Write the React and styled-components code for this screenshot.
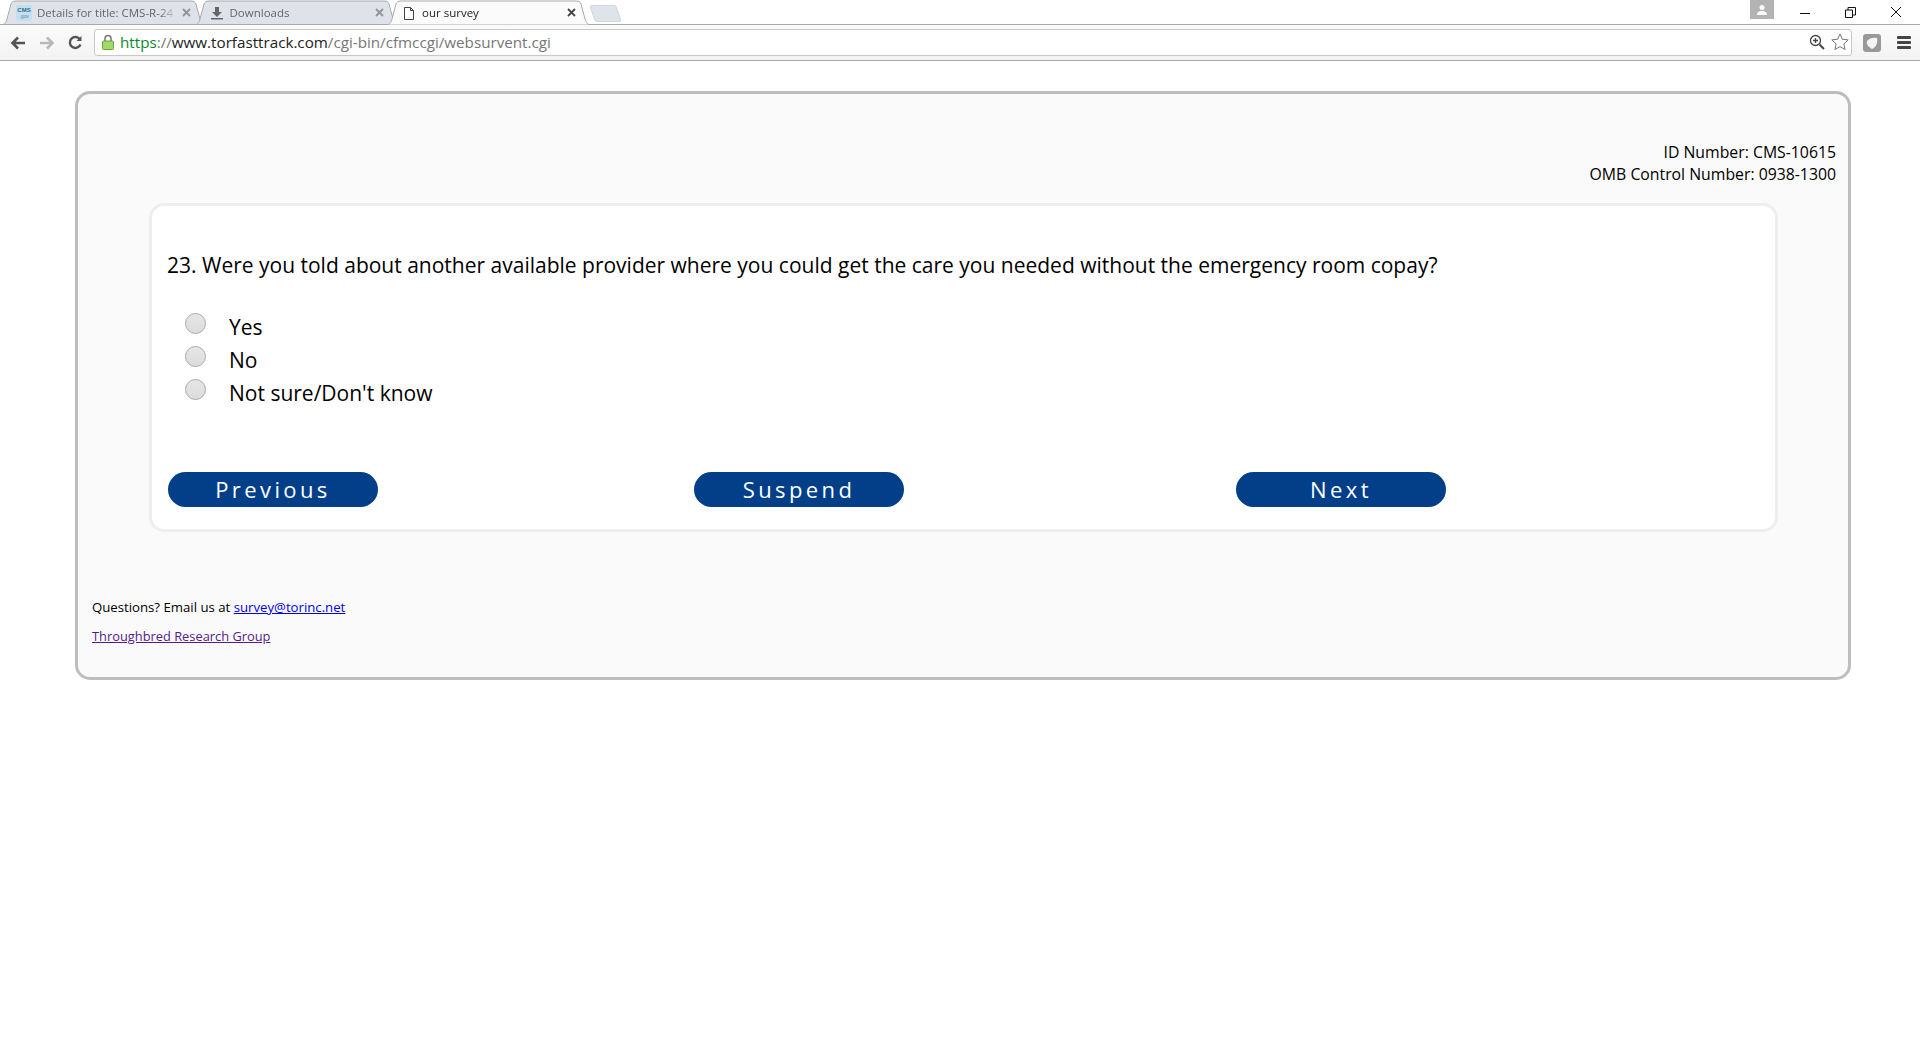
import React from "react"
import styled, { createGlobalStyle } from "styled-components"

const GlobalStyle = createGlobalStyle`
  html, body {
    margin: 0;
    padding: 0;
    background: #fff;
  }
  body {
    font-family: "Open Sans", "Noto Sans", sans-serif;
    color: #000;
  }
`

const Browser = styled.div`
  height: 1040px;
  display: flex;
  flex-direction: column;
  overflow: hidden;
`

const TabStrip = styled.div`
  height: 25px;
  display: flex;
  background: #fff;
  position: relative;
  &::after {
    content: "";
    position: absolute;
    left: 0;
    right: 0;
    bottom: 0;
    height: 1px;
    background: #a9a9a9;
    z-index: 2;
  }
`

const Tab = styled.div`
  width: 207px;
  height: 25px;
  flex: none;
  margin-right: -14.5px;
  display: flex;
  align-items: center;
  gap: 5px;
  padding: 0 16px;
  box-sizing: border-box;
  position: relative;
  font-size: 11.5px;
  color: ${p => (p.$active ? "#222" : "#62666c")};
  z-index: ${p => (p.$active ? 3 : 1)};
`

const TabShapeSvg = styled.svg`
  position: absolute;
  top: 0;
  left: 0;
  z-index: -1;
`

const TabTitle = styled.span`
  flex: 1;
  min-width: 0;
  white-space: nowrap;
  overflow: hidden;
  -webkit-mask-image: linear-gradient(to right, #000 88%, transparent);
  mask-image: linear-gradient(to right, #000 88%, transparent);
`

const TabClose = styled.span`
  width: 9px;
  height: 9px;
  display: flex;
  color: ${p => (p.$active ? "#444" : "#8f9296")};
`

const NewTab = styled.div`
  width: 25px;
  height: 15px;
  flex: none;
  margin: 5px 0 0 14px;
  background: #dfe3ea;
  border: 1px solid #d2d5d9;
  border-radius: 3px;
  transform: skewX(18deg);
`

const WindowControls = styled.div`
  position: absolute;
  top: 0;
  right: 2px;
  display: flex;
  align-items: flex-start;
`

const Avatar = styled.div`
  width: 24px;
  height: 19px;
  margin-right: 9px;
  background: #b3b3b3;
  display: flex;
  align-items: center;
  justify-content: center;
`

const WinButton = styled.div`
  width: 45px;
  height: 24px;
  display: flex;
  align-items: center;
  justify-content: center;
`

const Toolbar = styled.div`
  height: 36px;
  box-sizing: border-box;
  display: flex;
  align-items: center;
  background: linear-gradient(#fbfbfb, #f3f3f3);
  border-bottom: 1px solid #a9a9a9;
`

const NavButton = styled.div`
  width: 29px;
  height: 24px;
  display: flex;
  align-items: center;
  justify-content: center;
  &:first-child {
    margin-left: 3px;
  }
`

const Omnibox = styled.div`
  width: 1758px;
  height: 27px;
  margin-left: 4px;
  box-sizing: border-box;
  background: #fff;
  border: 1px solid #c8c8c8;
  border-radius: 3px;
  display: flex;
  align-items: center;
  padding: 0 1px 1px 7px;
  font-size: 15.2px;
  color: #777;
`

const Https = styled.span`
  color: #0a8a2c;
  margin-left: 6px;
`

const Host = styled.span`
  color: #222;
`

const Spacer = styled.div`
  flex: 1;
`

const ToolIcon = styled.div`
  width: ${p => p.$w}px;
  margin-left: ${p => p.$gap || 0}px;
  display: flex;
  align-items: center;
  justify-content: center;
`

const Page = styled.div`
  padding: 30px 69px 0 75px;
`

const Panel = styled.div`
  height: 589px;
  box-sizing: border-box;
  background: #fafafa;
  border: 3px solid #bdbdbd;
  border-radius: 15px;
  padding: 47px 12px 0 14px;
`

const FormIds = styled.div`
  text-align: right;
  font-size: 15.8px;
  line-height: 22px;
  height: 62px;
`

const Card = styled.div`
  margin: 0 58px 0 57px;
  height: 329px;
  box-sizing: border-box;
  background: #fff;
  border: 3px solid #eee;
  border-radius: 15px;
  padding: 45px 0 0 15px;
`

const Question = styled.div`
  font-size: 21px;
  line-height: 28px;
  white-space: nowrap;
`

const Options = styled.div`
  margin-top: 34px;
  padding-left: 18px;
  display: flex;
  flex-direction: column;
`

const OptionRow = styled.label`
  height: 33px;
  display: flex;
  align-items: flex-start;
  font-size: 21px;
  line-height: 28px;
`

const Radio = styled.span`
  width: 21px;
  height: 21px;
  box-sizing: border-box;
  border-radius: 50%;
  border: 1px solid #a8a8a8;
  background: linear-gradient(#e6e6e6, #dcdcdc);
  margin-right: 23px;
  flex: none;
`

const Buttons = styled.div`
  margin-top: 60px;
  display: flex;
  padding-left: 1px;
`

const PillButton = styled.button`
  width: 210px;
  height: 35px;
  padding: 0;
  flex: none;
  margin-right: ${p => p.$gap}px;
  border: none;
  border-radius: 18px;
  background: #023f88;
  color: #fff;
  font-family: "Open Sans", sans-serif;
  font-size: 22px;
  font-weight: 400;
  letter-spacing: 3.4px;
  line-height: 35px;
`

const Footer = styled.div`
  margin-top: 67px;
  font-size: 13.2px;
  line-height: 17px;
`

const FooterLine = styled.div`
  margin-bottom: 12px;
`

const MailLink = styled.a`
  color: #0000ee;
`

const VisitedLink = styled.a`
  color: #551a8b;
  font-size: 12.85px;
`

const TabShape = ({ active }) => (
  <TabShapeSvg width="207" height="25" viewBox="0 0 207 25">
    <path
      d="M0 25C4 25 6 23 7 19L11 4C12 2 13 1 16 1H191C194 1 195 2 196 4L200 19C201 23 203 25 207 25Z"
      fill={active ? "#fbfbfb" : "#dfe3e9"}
      stroke="#a9a9a9"
    />
  </TabShapeSvg>
)

const CloseGlyph = () => (
  <svg width="9" height="9" viewBox="0 0 9 9" stroke="currentColor" strokeWidth="1.8">
    <path d="M1 1l7 7M8 1l-7 7" />
  </svg>
)

const options = ["Yes", "No", "Not sure/Don't know"]

export default function App() {
  return (
    <Browser>
      <GlobalStyle />
      <TabStrip>
        <Tab>
          <TabShape />
          <svg width="16" height="16" viewBox="0 0 16 16">
            <rect width="16" height="16" rx="3" fill="#c4dff0" />
            <text x="8" y="7" fontSize="6" fontWeight="700" textAnchor="middle" fontFamily="Liberation Sans" fill="#33688f">CMS</text>
            <text x="8" y="13" fontSize="5" textAnchor="middle" fontFamily="Liberation Sans" fill="#5d87a5">.gov</text>
          </svg>
          <TabTitle>Details for title: CMS-R-24</TabTitle>
          <TabClose><CloseGlyph /></TabClose>
        </Tab>
        <Tab>
          <TabShape />
          <svg width="16" height="16" viewBox="0 0 16 16" fill="#666">
            <path d="M6 2h4v5h3l-5 5-5-5h3zM2 13h12v1.500H2z" />
          </svg>
          <TabTitle>Downloads</TabTitle>
          <TabClose><CloseGlyph /></TabClose>
        </Tab>
        <Tab $active>
          <TabShape active />
          <svg width="16" height="16" viewBox="0 0 16 16" fill="#fff" stroke="#444">
            <path d="M3.500 2.500h6l3 3v9h-9zM9.500 2.500v3h3" />
          </svg>
          <TabTitle>our survey</TabTitle>
          <TabClose $active><CloseGlyph /></TabClose>
        </Tab>
        <NewTab />
        <WindowControls>
          <Avatar>
            <svg width="12" height="12" viewBox="0 0 12 12" fill="#fff">
              <circle cx="6" cy="3.500" r="2.500" />
              <path d="M1 11c0-3 2-4 5-4s5 1 5 4z" />
            </svg>
          </Avatar>
          <WinButton>
            <svg width="11" height="11" viewBox="0 0 11 11" stroke="#111"><path d="M0 6.500h10" /></svg>
          </WinButton>
          <WinButton>
            <svg width="11" height="11" viewBox="0 0 11 11" fill="none" stroke="#111">
              <path d="M.5 3h7v7.500h-7zM3 3V.5h7.500V8H8" />
            </svg>
          </WinButton>
          <WinButton>
            <svg width="12" height="12" viewBox="0 0 12 12" stroke="#111"><path d="M1 1l10 10M11 1L1 11" /></svg>
          </WinButton>
        </WindowControls>
      </TabStrip>
      <Toolbar>
        <NavButton>
          <svg width="16" height="14" viewBox="0 0 16 14" fill="none" stroke="#555" strokeWidth="2.600">
            <path d="M15 7H3M8 1.500L2.500 7 8 12.500" />
          </svg>
        </NavButton>
        <NavButton>
          <svg width="16" height="14" viewBox="0 0 16 14" fill="none" stroke="#b8b8b8" strokeWidth="2.600">
            <path d="M1 7h12M8 1.500L13.500 7 8 12.500" />
          </svg>
        </NavButton>
        <NavButton>
          <svg width="15" height="15" viewBox="0 0 15 15" fill="none" stroke="#555" strokeWidth="2.400">
            <path d="M12.500 9.500a5.500 5.500 0 1 1-.5-5" />
            <path d="M13.500 1v5h-5z" fill="#555" stroke="none" />
          </svg>
        </NavButton>
        <Omnibox>
          <svg width="12" height="16" viewBox="0 0 12 16">
            <path d="M3 7V4.500a3 3 0 0 1 6 0V7" fill="none" stroke="#777" strokeWidth="1.500" />
            <rect x=".5" y="7" width="11" height="8.500" rx="1" fill="#a3d86a" stroke="#6aa535" />
          </svg>
          <Https>https</Https>
          <span>://</span>
          <Host>www.torfasttrack.com</Host>
          <span>/cgi-bin/cfmccgi/websurvent.cgi</span>
          <Spacer />
          <ToolIcon $w={20}>
            <svg width="16" height="16" viewBox="0 0 16 16" fill="none" stroke="#444" strokeWidth="1.300">
              <circle cx="6.500" cy="6.500" r="5" />
              <path d="M4 6.500h5M6.500 4v5" />
              <path d="M10.500 10.500l4.500 4.500" strokeWidth="2" />
            </svg>
          </ToolIcon>
          <ToolIcon $w={20} $gap={3}>
            <svg width="18" height="18" viewBox="0 0 18 18" fill="#fff" stroke="#777">
              <path d="M9 1l2.400 5.300 5.800.6-4.300 3.900 1.200 5.700L9 13.600l-5.100 2.900 1.200-5.700L.8 6.900l5.800-.6z" />
            </svg>
          </ToolIcon>
        </Omnibox>
        <ToolIcon $w={39}>
          <svg width="18" height="18" viewBox="0 0 18 18">
            <rect width="18" height="18" rx="3" fill="#999" />
            <path d="M4 7c2-3 7-4 10-3 1 5-1 9-5 11-3-2-6-4-5-8z" fill="#f4f4f4" />
          </svg>
        </ToolIcon>
        <ToolIcon $w={25}>
          <svg width="14" height="13" viewBox="0 0 14 13" fill="#444">
            <rect width="14" height="3" rx="1" />
            <rect y="5" width="14" height="3" rx="1" />
            <rect y="10" width="14" height="3" rx="1" />
          </svg>
        </ToolIcon>
      </Toolbar>
      <Page>
        <Panel>
          <FormIds>
            ID Number: CMS-10615<br />
            OMB Control Number: 0938-1300
          </FormIds>
          <Card>
            <Question>23. Were you told about another available provider where you could get the care you needed without the emergency room copay?</Question>
            <Options>
              {options.map(o => (
                <OptionRow key={o}>
                  <Radio />
                  <span>{o}</span>
                </OptionRow>
              ))}
            </Options>
            <Buttons>
              <PillButton $gap={316}>Previous</PillButton>
              <PillButton $gap={332}>Suspend</PillButton>
              <PillButton $gap={0}>Next</PillButton>
            </Buttons>
          </Card>
          <Footer>
            <FooterLine>Questions? Email us at <MailLink href="#">survey@torinc.net</MailLink></FooterLine>
            <FooterLine><VisitedLink href="#">Throughbred Research Group</VisitedLink></FooterLine>
          </Footer>
        </Panel>
      </Page>
    </Browser>
  )
}
